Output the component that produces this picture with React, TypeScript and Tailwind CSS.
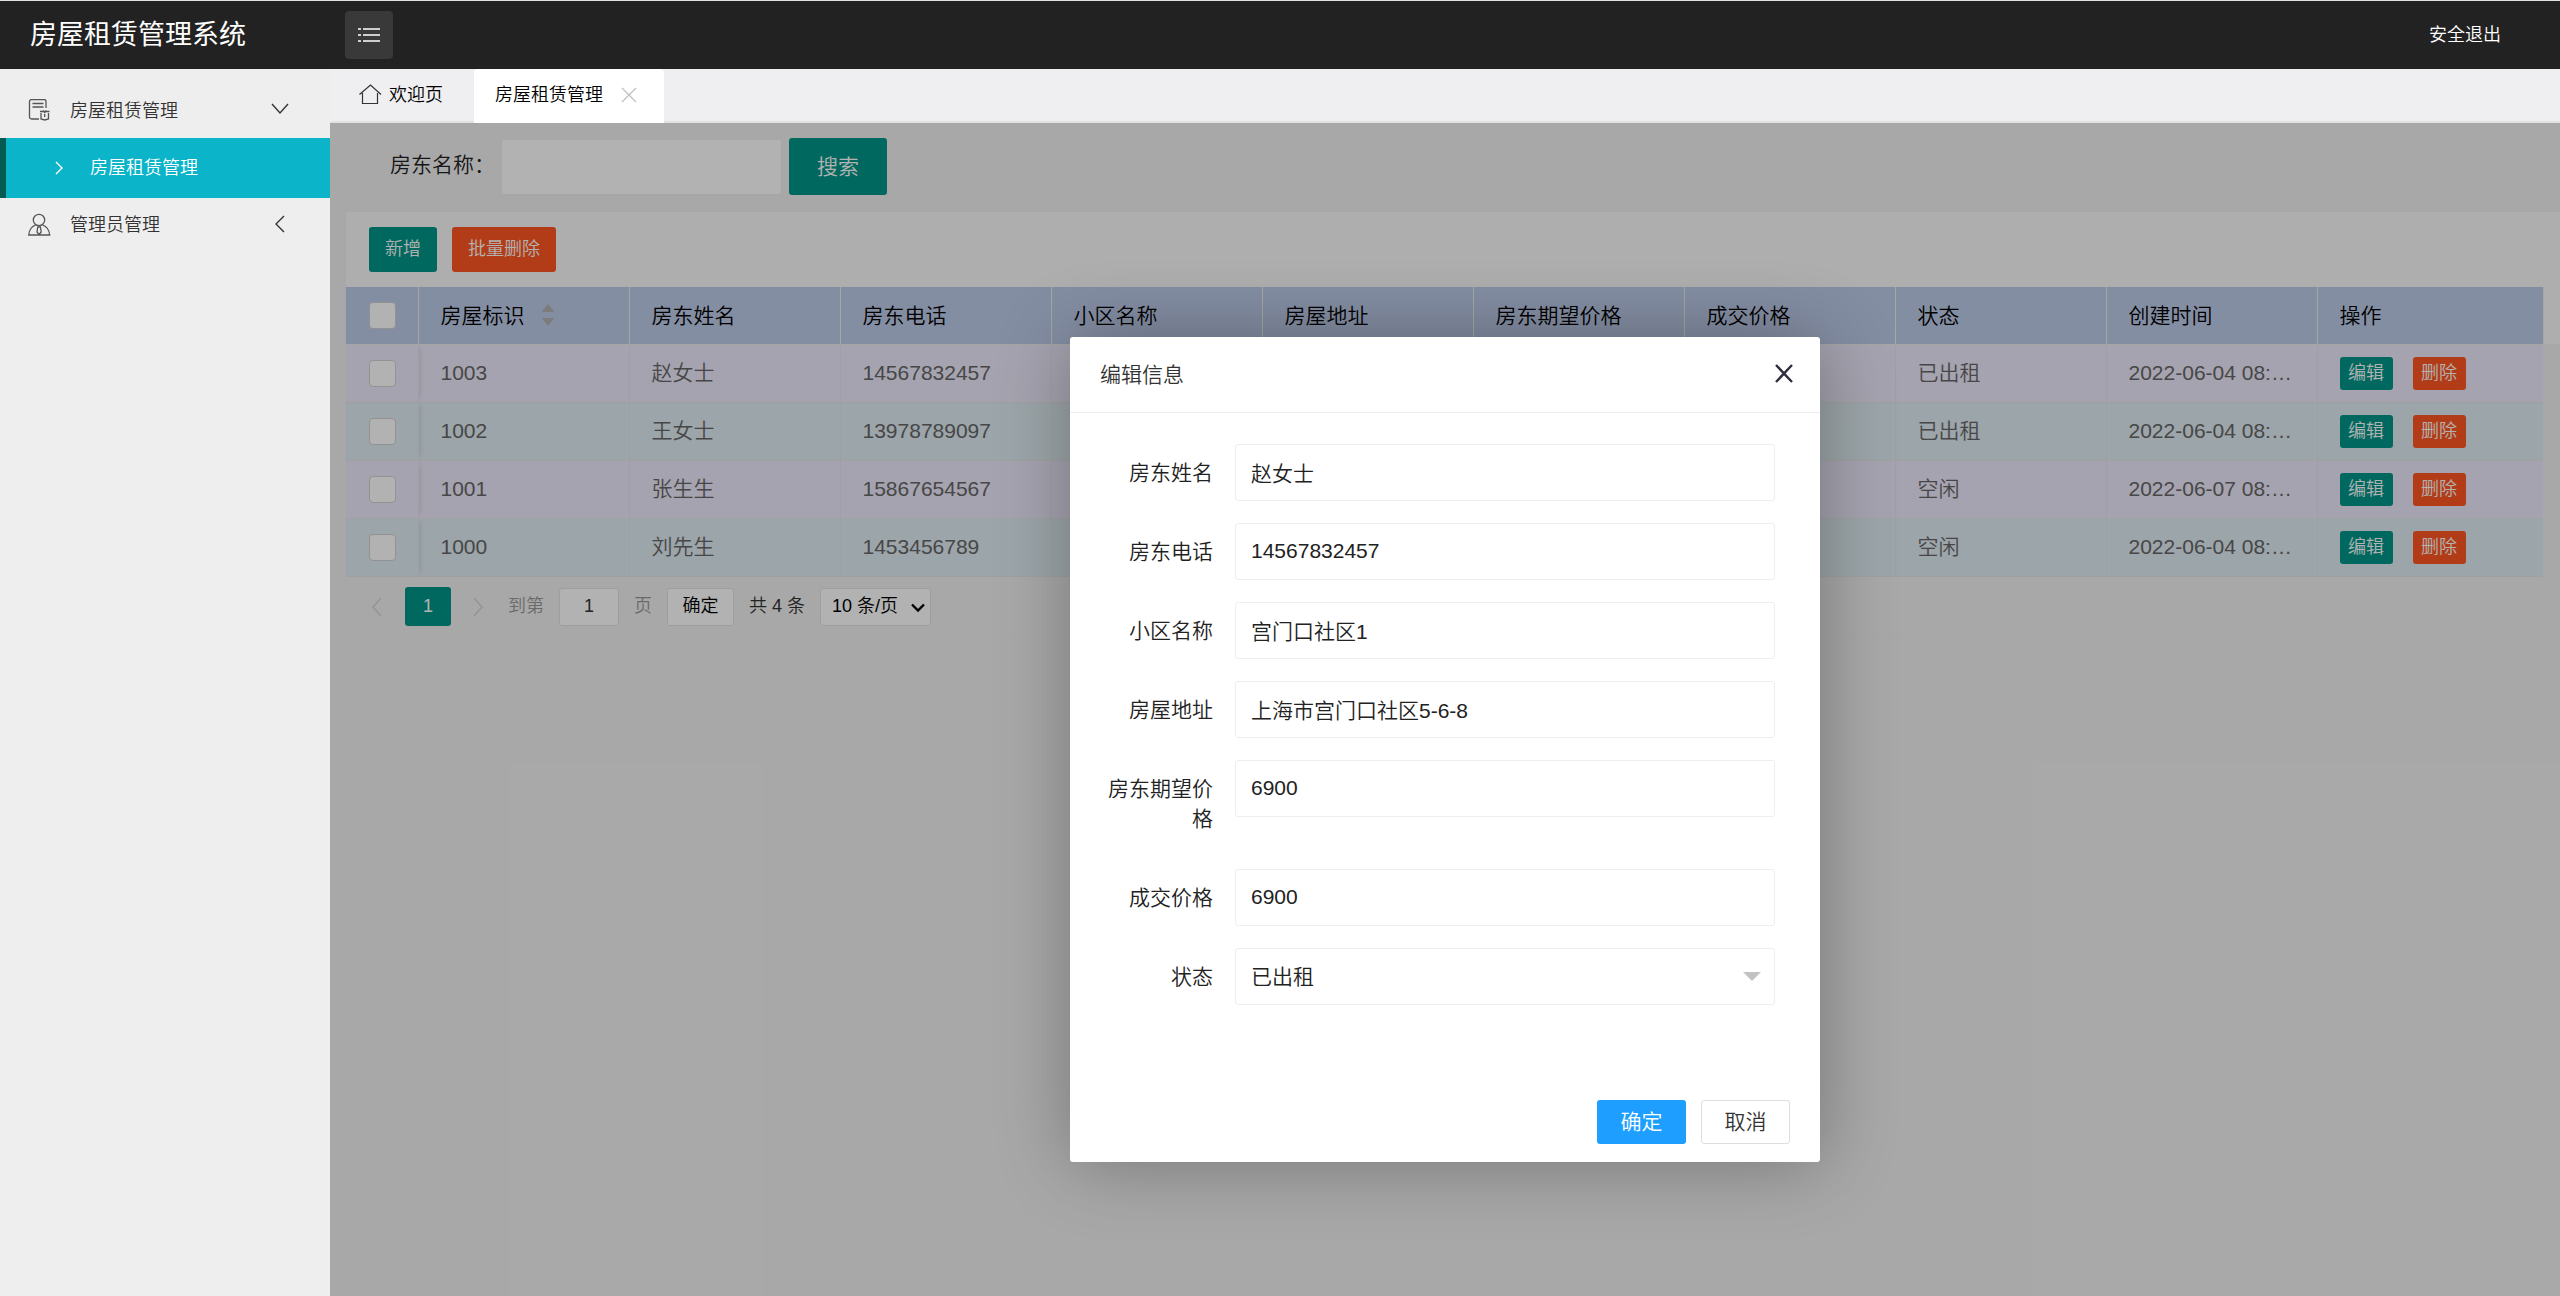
import React, { useState } from 'react';

interface House {
  id: string;
  owner: string;
  phone: string;
  community: string;
  address: string;
  expected: string;
  deal: string;
  status: string;
  created: string;
}

const houses: House[] = [
  { id: '1003', owner: '赵女士', phone: '14567832457', community: '', address: '', expected: '', deal: '', status: '已出租', created: '2022-06-04 08:00:00' },
  { id: '1002', owner: '王女士', phone: '13978789097', community: '', address: '', expected: '', deal: '', status: '已出租', created: '2022-06-04 08:00:00' },
  { id: '1001', owner: '张生生', phone: '15867654567', community: '', address: '', expected: '', deal: '', status: '空闲', created: '2022-06-07 08:00:00' },
  { id: '1000', owner: '刘先生', phone: '1453456789', community: '', address: '', expected: '', deal: '', status: '空闲', created: '2022-06-04 08:00:00' },
];

const columns = ['房屋标识', '房东姓名', '房东电话', '小区名称', '房屋地址', '房东期望价格', '成交价格', '状态', '创建时间'];

const fields: { key: keyof House; label: string }[] = [
  { key: 'owner', label: '房东姓名' },
  { key: 'phone', label: '房东电话' },
  { key: 'community', label: '小区名称' },
  { key: 'address', label: '房屋地址' },
  { key: 'expected', label: '房东期望价格' },
  { key: 'deal', label: '成交价格' },
];

const current: House = {
  ...houses[0],
  community: '宫门口社区1',
  address: '上海市宫门口社区5-6-8',
  expected: '6900',
  deal: '6900',
};

const Chevron = ({ className, d }: { className: string; d: string }) => (
  <svg viewBox="0 0 20 20" className={className} fill="none" stroke="currentColor" strokeWidth="1.4">
    <path d={d} />
  </svg>
);

const Header = () => (
  <header className="flex h-[69px] items-center border-t border-[#dfe3e1] bg-[#222] text-white">
    <h1 className="w-[345px] shrink-0 pl-[30px] text-[27px] leading-[66px] font-normal">房屋租赁管理系统</h1>
    <button type="button" aria-label="收起菜单" className="flex size-12 items-center justify-center rounded bg-[#393939]">
      <svg viewBox="0 0 22 16" className="h-4 w-[22px]" fill="none" stroke="currentColor" strokeWidth="1.6">
        <path d="M0 2h3M5 2h17M0 8h3M5 8h17M0 14h3M5 14h17" />
      </svg>
    </button>
    <a href="#logout" className="mr-[59px] ml-auto text-[18px]">安全退出</a>
  </header>
);

const Sidebar = () => (
  <nav className="w-[330px] shrink-0 bg-[#eee] pt-[15px] text-[18px] text-[#333]">
    <a href="#house" className="flex h-[54px] items-center pl-7">
      <svg viewBox="0 0 24 24" className="mr-[18px] size-6" fill="none" stroke="#555" strokeWidth="1.3">
        <path d="M11 20H3.500a2 2 0 0 1-2-2V2.500a2 2 0 0 1 2-2H16a2 2 0 0 1 2 2V9M4.500 4.500h11M4.500 8h11" />
        <path d="M12 12.500h9.500M13 14v6l3.700 1 3.800-1v-6M15 11.500l1.700 2 1.800-2M16.700 15v3" />
      </svg>
      房屋租赁管理
      <Chevron className="mr-10 ml-auto size-5" d="M2 3l8 9 8-9" />
    </a>
    <a href="#house-list" className="flex h-[60px] items-center border-l-[6px] border-[#055a52] bg-[#0bb4c8] pl-[43px] text-white">
      <Chevron className="mr-[21px] size-5" d="M7 4l6 6-6 6" />
      房屋租赁管理
    </a>
    <a href="#admin" className="flex h-[54px] items-center pl-7">
      <svg viewBox="0 0 24 24" className="mr-[18px] size-6" fill="none" stroke="#555" strokeWidth="1.3">
        <circle cx="11" cy="7" r="5.700" />
        <path d="M7.500 12C3.500 13.500 1.200 17 .7 22h21c-.5-5-3-8.500-7-10M9.800 14h2.600l.8 5-2.100 2.500L9 19z" />
      </svg>
      管理员管理
      <Chevron className="mr-10 ml-auto size-5" d="M14 1l-8 8 8 8" />
    </a>
  </nav>
);

const Tabs = () => (
  <div className="flex h-[54px] border-b-2 border-[#e2e2e2] bg-[#efeef0] text-[18px] leading-[50px] text-black">
    <a href="#welcome" className="flex w-36 items-center pl-7">
      <svg viewBox="0 0 24 24" className="mr-[7px] size-6" fill="none" stroke="#333" strokeWidth="1.2">
        <path d="M1.500 11.500L12.500 2l10.500 9.500M4.500 10v10.500h15V10" />
      </svg>
      欢迎页
    </a>
    <div className="-mb-0.5 flex w-[190px] items-center rounded-t bg-white pb-0.5 pl-[21px]">
      房屋租赁管理
      <button type="button" aria-label="关闭标签" className="ml-4 text-[#c2c2c2]">
        <Chevron className="size-5" d="M3 3l14 14M17 3L3 17" />
      </button>
    </div>
  </div>
);

const HouseTable = ({ onEdit }: { onEdit: (house: House) => void }) => (
  <table className="w-full table-fixed border-collapse text-left text-[21px] text-[#666]">
    <thead>
      <tr className="h-[57px] bg-[#beccea] text-black">
        <th className="w-[72px] border-r border-b border-[#eee] pl-[23px]">
          <input type="checkbox" aria-label="全选" className="block size-[27px] appearance-none rounded border border-[#d2d2d2] bg-white" />
        </th>
        {columns.map((name, i) => (
          <th key={name} className="w-[211px] border-r border-b border-[#eee] px-[22px] font-[350]">
            <span className="flex items-center">
              {name}
              {i === 0 && (
                <svg viewBox="0 0 14 24" className="ml-4 h-6 w-3.5" fill="#b2b2b2">
                  <path d="M7 1l6.500 8H.5zM7 23l6.500-8H.5z" />
                </svg>
              )}
            </span>
          </th>
        ))}
        <th className="w-[226px] border-r border-b border-[#eee] px-[22px] font-[350]">操作</th>
        <th className="border-b border-[#eee] bg-[#fafafa]" />
      </tr>
    </thead>
    <tbody>
      {houses.map((house) => (
        <tr key={house.id} className="h-[58px] odd:bg-[#edeafb] even:bg-[#e0ecf3]">
          <td className="border-r border-b border-[#e6e6e6] pl-[23px] shadow-[5px_0_6px_-4px_rgba(0,0,0,0.14)]">
            <input type="checkbox" aria-label={house.id} className="block size-[27px] appearance-none rounded border border-[#d2d2d2] bg-white" />
          </td>
          {Object.values(house).map((value, i) => (
            <td key={i} className="truncate border-r border-b border-[#e6e6e6] px-[22px]">{value}</td>
          ))}
          <td className="border-b border-[#e6e6e6] px-[22px]">
            <div className="flex gap-5 text-[18px] text-white">
              <button type="button" onClick={() => onEdit(house)} className="h-[33px] w-[53px] rounded-[3px] bg-[#009688]">编辑</button>
              <button type="button" className="h-[33px] w-[53px] rounded-[3px] bg-[#ff5722]">删除</button>
            </div>
          </td>
          <td className="bg-[#f1f1f1]" />
        </tr>
      ))}
    </tbody>
  </table>
);

const Pagination = () => (
  <div className="flex h-[60px] items-center pl-[22px] text-[18px] text-[#333]">
    <button type="button" aria-label="上一页" className="text-[#d2d2d2]">
      <Chevron className="size-5" d="M13 1l-8 9 8 9" />
    </button>
    <span className="ml-[17px] flex h-[39px] w-[46px] items-center justify-center rounded-[3px] bg-[#009688] text-white">1</span>
    <button type="button" aria-label="下一页" className="ml-[17px] text-[#d2d2d2]">
      <Chevron className="size-5" d="M6 1l8 9-8 9" />
    </button>
    <label htmlFor="page" className="ml-5 text-[#999]">到第</label>
    <input id="page" defaultValue="1" className="mx-[15px] h-[38px] w-[60px] rounded-[3px] border border-[#e2e2e2] bg-white text-center" />
    <span className="text-[#999]">页</span>
    <button type="button" className="ml-[15px] h-[38px] w-[67px] rounded-[3px] border border-[#e2e2e2] bg-white text-black">确定</button>
    <span className="mx-[15px]">共 4 条</span>
    <span className="relative">
      <select aria-label="每页条数" className="block h-[38px] w-[111px] appearance-none rounded-[3px] border border-[#e2e2e2] bg-white pl-[11px] text-black">
        <option>10 条/页</option>
      </select>
      <svg viewBox="0 0 14 10" className="pointer-events-none absolute top-[15px] right-[6px] h-2.5 w-3.5" fill="none" stroke="#000" strokeWidth="2.400">
        <path d="M1 1.500l6 6 6-6" />
      </svg>
    </span>
  </div>
);

const EditDialog = ({ house, onClose }: { house: House; onClose: () => void }) => (
  <div className="absolute inset-0 flex items-start justify-center bg-black/30 pt-[214px]">
    <form role="dialog" aria-label="编辑信息" className="w-[750px] rounded-[3px] bg-white text-[21px] text-[#222] shadow-[1px_1px_75px_rgba(0,0,0,0.3)]">
      <div className="flex h-[76px] items-center justify-between border-b border-[#eee] pr-[24px] pl-[30px]">
        <h2 className="text-[#333]">编辑信息</h2>
        <button type="button" aria-label="关闭" onClick={onClose} className="text-[#2e2d3c]">
          <svg viewBox="0 0 24 24" className="size-6" fill="none" stroke="currentColor" strokeWidth="2.400">
            <path d="M4 2l16 17M20 2L4 19" />
          </svg>
        </button>
      </div>
      <div className="flex h-[687px] flex-col gap-[22px] pt-[31px] pr-[45px]">
        {fields.map((field) => (
          <div key={field.key} className="flex items-start">
            <label htmlFor={field.key} className="w-[165px] shrink-0 pt-[14px] pr-[22px] pb-[13px] pl-[30px] text-right leading-[30px]">{field.label}</label>
            <input id={field.key} defaultValue={house[field.key]} className="h-[57px] min-w-0 flex-1 rounded-[3px] border border-[#eee] pb-0.5 pl-[15px]" />
          </div>
        ))}
        <div className="relative flex items-start">
          <label htmlFor="status" className="w-[165px] shrink-0 pt-[14px] pr-[22px] pb-[13px] text-right leading-[30px]">状态</label>
          <select id="status" defaultValue={house.status} className="h-[57px] flex-1 appearance-none rounded-[3px] border border-[#eee] pl-[15px]">
            <option>已出租</option>
            <option>空闲</option>
          </select>
          <svg viewBox="0 0 18 9" className="pointer-events-none absolute top-6 right-[14px] h-[9px] w-[18px]" fill="#c2c2c2">
            <path d="M0 0h18l-9 9z" />
          </svg>
        </div>
      </div>
      <div className="flex h-[62px] justify-end gap-[15px] pr-[30px]">
        <button type="button" className="h-11 w-[89px] rounded-[3px] bg-[#1e9fff] text-white">确定</button>
        <button type="button" onClick={onClose} className="h-11 w-[89px] rounded-[3px] border border-[#dedede] bg-white text-[#333]">取消</button>
      </div>
    </form>
  </div>
);

const App: React.FC = () => {
  const [editing, setEditing] = useState<House | null>(current);

  return (
    <div className="flex min-h-screen flex-col font-['Liberation_Sans','Noto_Sans_CJK_SC',sans-serif] font-[350]">
      <Header />
      <div className="flex flex-1">
        <Sidebar />
        <div className="flex min-w-0 flex-1 flex-col">
          <Tabs />
          <main className="relative flex-1 overflow-hidden bg-[#f1f1f1] pt-[15px] pl-[15px]">
            <div className="flex items-center pl-[45px] text-[21px] text-[#222]">
              <label htmlFor="owner-name" className="w-[111px] pb-1">房东名称：</label>
              <input id="owner-name" className="h-[56px] w-[281px] rounded-[3px] border border-[#eee] bg-white px-[15px]" />
              <button type="button" className="ml-[7px] h-[57px] w-[98px] rounded-[3px] bg-[#009688] text-white">搜索</button>
            </div>
            <div className="mt-4 border border-r-0 border-[#eee]">
              <div className="flex h-[75px] items-center gap-[15px] bg-[#fafafa] pl-[23px] text-[18px] text-white">
                <button type="button" className="h-[45px] w-[68px] rounded-[3px] bg-[#009688]">新增</button>
                <button type="button" className="h-[45px] w-[104px] rounded-[3px] bg-[#ff5722]">批量删除</button>
              </div>
              <HouseTable onEdit={setEditing} />
              <Pagination />
            </div>
            {editing && <EditDialog house={editing} onClose={() => setEditing(null)} />}
          </main>
        </div>
      </div>
    </div>
  );
};

export default App;
